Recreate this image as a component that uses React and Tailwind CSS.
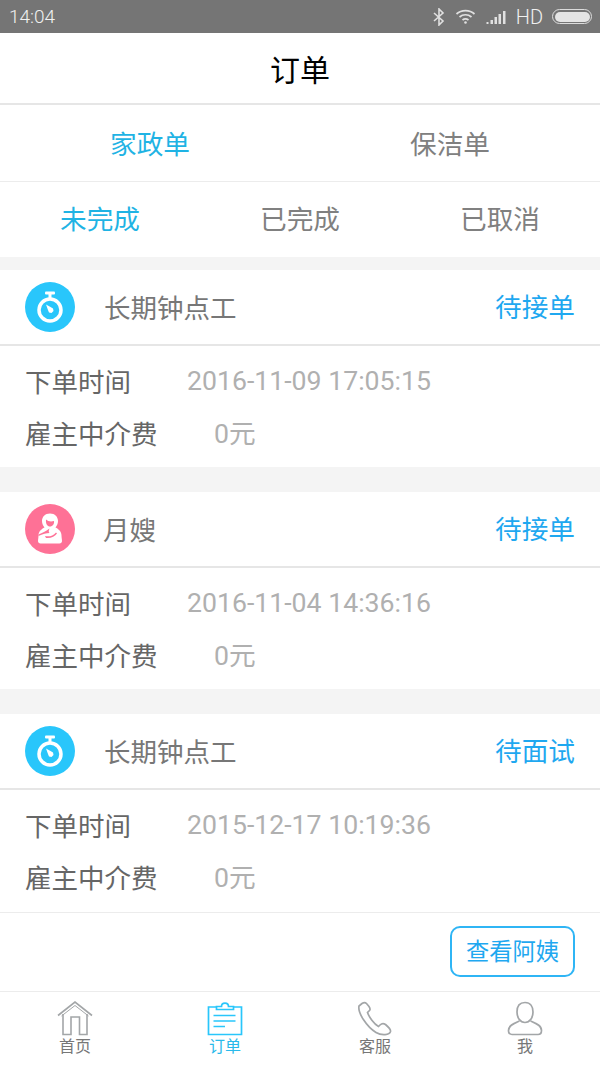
const CJK = { fontFamily: '"Noto Sans CJK SC", "Noto Sans", sans-serif' };

function Status() {
  return (
    <div className="flex h-[33px] items-center justify-between bg-[#757575] pl-[9px] pr-[8px] text-[#f0f0f0]" style={{ fontFamily: 'Roboto, sans-serif' }}>
      <span className="text-[19px] font-light leading-none">14:04</span>
      <div className="flex items-center">
        <svg width="12" height="18" viewBox="0 0 12 18" fill="none" stroke="#e0e0e0" strokeWidth="1.6"><path d="M1 5l9 8-4 4V1l4 4-9 8" /></svg>
        <svg className="ml-[10px]" width="21" height="15" viewBox="0 0 20 15" fill="none" stroke="#e0e0e0" strokeWidth="1.700"><path d="M1 5c5-4.600 13-4.600 18 0M4 8c3.500-3 8.500-3 12 0M7 11c1.800-1.400 4.200-1.400 6 0" /><circle cx="10" cy="13.500" r="1.300" fill="#e0e0e0" stroke="none" /></svg>
        <svg className="ml-[10px]" width="21" height="14" viewBox="0 0 20 14" fill="#e0e0e0"><rect x="0" y="12" width="2" height="2" /><rect x="4" y="10" width="2.500" height="4" /><rect x="8" y="7" width="2.500" height="7" /><rect x="12" y="4" width="2.500" height="10" /><rect x="16.500" y="1" width="2.500" height="13" /></svg>
        <span className="ml-[9px] text-[20px] font-light leading-none">HD</span>
        <div className="ml-[9px] flex h-[15px] w-[40px] items-center rounded-full border border-[#dcdcdc] p-[1.500px]">
          <div className="h-full w-full rounded-full bg-[#e4e4e4]" />
        </div>
      </div>
    </div>
  );
}

function Stopwatch() {
  return (
    <svg width="50" height="50" viewBox="0 0 50 50" className="shrink-0">
      <circle cx="25" cy="25" r="25" fill="#29c6fb" />
      <rect x="20" y="9.500" width="10" height="3" rx="1" fill="#fff" />
      <rect x="23.500" y="11" width="3" height="5" fill="#fff" />
      <circle cx="25" cy="28" r="11" fill="none" stroke="#fff" strokeWidth="3.500" />
      <path d="M21 22.500l4.500 2.500 2.500 1.500 .5 2.500-2 2-2.500-.5-1-2.500z" fill="#fff" />
    </svg>
  );
}

function Nanny() {
  return (
    <svg width="50" height="50" viewBox="0 0 50 50" className="shrink-0">
      <circle cx="25" cy="25" r="25" fill="#fe7196" />
      <path d="M25 9.500c-5 0-8 3.500-8 7.500 0 2.500 1 4.500 2.500 6.500-3 1.500-6 4-6 8 0 2-.5 4-.5 5.500 0 1.500 1 2.500 2.500 2.500h19c1.500 0 2.500-1 2.500-2.500 0-1.500-.5-3.500-.5-5.500 0-4-3-6.500-6-8 1.500-2 2.500-4 2.500-6.500 0-4-3-7.500-8-7.500z" fill="#fff" />
      <path d="M21 15.500c2 2 5 2.500 8 1.500.5 3-1.500 5.500-4 5.500s-4.500-2.500-4-7z" fill="#fe7196" />
      <path d="M13.500 30.500c4-1.500 7-3 11-6-1 2-1 3.500 0 4.500-3 0-7 1-11 3zM20 32c4 1 8 0 11-3.500l1 1c-2 3-6 5-11 4.500z" fill="#fe7196" />
    </svg>
  );
}

function Card({ icon, title, status, date, titleGap, children }) {
  return (
    <div className="bg-white">
      <div className="flex h-[75.500px] items-center border-b-2 border-[#e6e6e6] pl-[25px] pr-[25px]">
        {icon}
        <span className={`${titleGap} flex-1 text-[26.500px] leading-none text-[#777]`}>{title}</span>
        <span className="text-[26.670px] leading-none text-[#1fa8f0]">{status}</span>
      </div>
      <div className="flex h-[52px] items-center pl-[25px] pt-[19px]">
        <span className="w-[162px] text-[26.500px] leading-none text-[#666]">下单时间</span>
        <span className="text-[26.670px] leading-none text-[#b0b0b0]" style={{ fontFamily: 'Roboto, sans-serif' }}>{date}</span>
      </div>
      <div className="flex h-[52px] items-center pl-[25px] pt-[19px]">
        <span className="w-[189px] text-[26.500px] leading-none text-[#666]">雇主中介费</span>
        <span className="text-[26.670px] leading-none text-[#b0b0b0]"><span style={{ fontFamily: 'Roboto, sans-serif' }}>0</span>元</span>
      </div>
      {children}
    </div>
  );
}

function NavItem({ label, active, children }) {
  return (
    <div className="flex flex-1 flex-col items-center pt-[9px]">
      <div className="h-[35px] w-[36px]">{children}</div>
      <span className={`text-[16px] leading-[18px] ${active ? 'text-[#29b9ea]' : 'text-[#777]'}`}>{label}</span>
    </div>
  );
}

export default function App() {
  return (
    <div className="flex h-[1067px] w-[600px] flex-col overflow-hidden bg-[#f4f4f4]" style={CJK}>
      <Status />
      <div className="flex h-[72px] shrink-0 items-center justify-center border-b-2 border-[#e6e6e6] bg-white text-[30px] leading-none text-black">订单</div>
      <div className="flex h-[77px] shrink-0 border-b border-[#ececec] bg-white text-[26.670px] leading-none">
        <div className="flex flex-1 items-center justify-center text-[#1fb3e4]">家政单</div>
        <div className="flex flex-1 items-center justify-center text-[#808080]">保洁单</div>
      </div>
      <div className="flex h-[75px] shrink-0 bg-white pb-[2px] text-[26.670px] leading-none">
        <div className="flex flex-1 items-center justify-center text-[#1fb3e4]">未完成</div>
        <div className="flex flex-1 items-center justify-center text-[#808080]">已完成</div>
        <div className="flex flex-1 items-center justify-center text-[#808080]">已取消</div>
      </div>
      <div className="mt-[13px] flex flex-col gap-[25px]">
        <Card icon={<Stopwatch />} title="长期钟点工" status="待接单" date="2016-11-09 17:05:15" titleGap="ml-[29px]">
          <div className="h-[17.500px]" />
        </Card>
        <Card icon={<Nanny />} title="月嫂" status="待接单" date="2016-11-04 14:36:16" titleGap="ml-[28px]">
          <div className="h-[17.500px]" />
        </Card>
        <Card icon={<Stopwatch />} title="长期钟点工" status="待面试" date="2015-12-17 10:19:36" titleGap="ml-[29px]">
          <div className="mt-[18px] flex h-[79px] justify-end border-t border-[#ececec] pr-[25px] pt-[13px]">
            <div className="flex h-[51px] w-[125px] items-center justify-center rounded-[10px] border-2 border-[#2fb5f5] text-[23.300px] leading-none text-[#1fa8f0]">查看阿姨</div>
          </div>
        </Card>
      </div>
      <div className="mt-auto flex h-[76px] shrink-0 border-t border-[#ececec] bg-white">
        <NavItem label="首页">
          <svg width="36" height="35" viewBox="0 0 36 35" fill="none" stroke="#a3a6a8" strokeWidth="1.600">
            <path d="M1 14.500L18 1 35 14.500" />
            <path d="M4.500 15L18 4.500 31.500 15" strokeWidth="1" />
            <path d="M6 13V33.500H14V16H22.500V33.500H30V13" />
          </svg>
        </NavItem>
        <NavItem label="订单" active>
          <svg width="36" height="35" viewBox="0 0 36 35" fill="none" stroke="#29c6fb" strokeWidth="1.700">
            <path d="M9 6H1.500V33.500H34.500V6H27" />
            <path d="M9.500 8.500V5.500H14.500C14.500 1 21.500 1 21.500 5.500H26.500V8.500Z" />
            <path d="M6.500 14.500H28.500M6.500 20H28.500M6.500 25.500H18" />
          </svg>
        </NavItem>
        <NavItem label="客服">
          <svg width="36" height="35" viewBox="0 0 36 35" fill="none" stroke="#a3a6a8" strokeWidth="1.700">
            <path d="M5 2.500L2 5C0.500 12 10 26 19 31.500C25 35 32.500 34 33.500 30.500C34 28.500 32 26.500 28.500 23.500C26.500 22 25 22 23 24L21.500 25.500C17 23 12 16 10.500 11.500L12.500 9.500C13.500 8.500 13 7 12 5.500L9.500 2.500C8 1 6.500 1.500 5 2.500Z" />
          </svg>
        </NavItem>
        <NavItem label="我">
          <svg width="36" height="35" viewBox="0 0 36 35" fill="none" stroke="#a3a6a8" strokeWidth="1.700">
            <path d="M18 1.500C12.500 1.500 10 5.500 10 11C10 16.500 13 21.500 18 21.500C23 21.500 26 16.500 26 11C26 5.500 23.500 1.500 18 1.500Z" />
            <path d="M12.500 20C8 22 1.500 24 1.500 29.500C1.500 32 2.500 33.500 5 33.500H31C33.500 33.500 34.500 32 34.500 29.500C34.500 24 28 22 23.500 20" />
          </svg>
        </NavItem>
      </div>
    </div>
  );
}
